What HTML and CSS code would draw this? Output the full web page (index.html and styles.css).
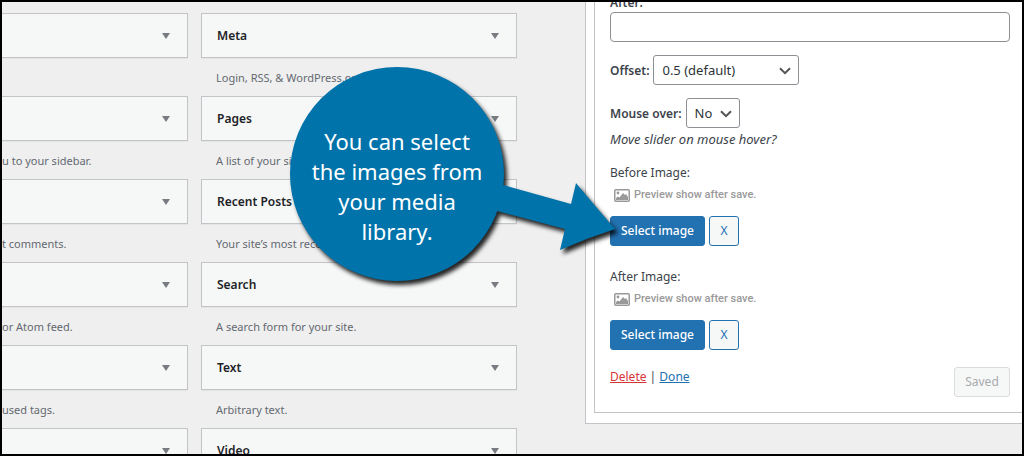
FILE: index.html
```
<!DOCTYPE html>
<html lang="en">
<head>
<meta charset="utf-8">
<title>Widgets</title>
<link rel="stylesheet" href="styles.css">
</head>
<body>
<main class="screen">
  <section class="column column-left">
    <article class="widget"><button class="widget-bar" aria-label="Expand"><span class="arrow"></span></button><p class="widget-desc"></p></article>
    <article class="widget"><button class="widget-bar" aria-label="Expand"><span class="arrow"></span></button><p class="widget-desc">u to your sidebar.</p></article>
    <article class="widget"><button class="widget-bar" aria-label="Expand"><span class="arrow"></span></button><p class="widget-desc">t comments.</p></article>
    <article class="widget"><button class="widget-bar" aria-label="Expand"><span class="arrow"></span></button><p class="widget-desc">or Atom feed.</p></article>
    <article class="widget"><button class="widget-bar" aria-label="Expand"><span class="arrow"></span></button><p class="widget-desc">used tags.</p></article>
    <article class="widget"><button class="widget-bar" aria-label="Expand"><span class="arrow"></span></button></article>
  </section>

  <section class="column">
    <article class="widget"><button class="widget-bar">Meta<span class="arrow"></span></button><p class="widget-desc">Login, RSS, &amp; WordPress.org links.</p></article>
    <article class="widget"><button class="widget-bar">Pages<span class="arrow"></span></button><p class="widget-desc">A list of your site</p></article>
    <article class="widget"><button class="widget-bar">Recent Posts<span class="arrow"></span></button><p class="widget-desc">Your site’s most recent Posts.</p></article>
    <article class="widget"><button class="widget-bar">Search<span class="arrow"></span></button><p class="widget-desc">A search form for your site.</p></article>
    <article class="widget"><button class="widget-bar">Text<span class="arrow"></span></button><p class="widget-desc">Arbitrary text.</p></article>
    <article class="widget"><button class="widget-bar">Video<span class="arrow"></span></button></article>
  </section>

  <section class="sidebar">
    <form class="settings">
      <div class="field-block">
        <label class="strong" for="after">After:</label>
        <input class="text-input" id="after" type="text">
      </div>
      <div class="field-row">
        <label class="strong" for="offset">Offset:</label>
        <span class="select-wrap select-wide">
          <select id="offset"><option>0.5 (default)</option></select>
          <svg class="chevron" viewBox="0 0 12 8" aria-hidden="true"><path d="M1 1.200l5 5 5-5"/></svg>
        </span>
      </div>
      <div class="field-row">
        <label class="strong" for="hover">Mouse over:</label>
        <span class="select-wrap select-small">
          <select id="hover"><option>No</option></select>
          <svg class="chevron" viewBox="0 0 12 8" aria-hidden="true"><path d="M1 1.200l5 5 5-5"/></svg>
        </span>
      </div>
      <p class="hint">Move slider on mouse hover?</p>

      <div class="image-field">
        <p class="image-label">Before Image:</p>
        <p class="preview">
          <svg class="picture" viewBox="0 0 16 13" aria-hidden="true"><rect x=".75" y=".75" width="14.500" height="11.500" rx="1"/><circle cx="4" cy="4" r="1.400"/><path d="M2 11V9l2-1.500 1.500 1L9 4l2 2 1-1 2 3v3z"/></svg>
          Preview show after save.
        </p>
        <div class="buttons">
          <button class="btn btn-primary" type="button">Select image</button>
          <button class="btn btn-clear" type="button">X</button>
        </div>
      </div>
      <div class="image-field">
        <p class="image-label">After Image:</p>
        <p class="preview">
          <svg class="picture" viewBox="0 0 16 13" aria-hidden="true"><rect x=".75" y=".75" width="14.500" height="11.500" rx="1"/><circle cx="4" cy="4" r="1.400"/><path d="M2 11V9l2-1.500 1.500 1L9 4l2 2 1-1 2 3v3z"/></svg>
          Preview show after save.
        </p>
        <div class="buttons">
          <button class="btn btn-primary" type="button">Select image</button>
          <button class="btn btn-clear" type="button">X</button>
        </div>
      </div>

      <div class="actions">
        <p class="links"><a class="delete" href="#">Delete</a> | <a href="#">Done</a></p>
        <button class="btn btn-saved" type="button" disabled>Saved</button>
      </div>
    </form>
  </section>

  <aside class="callout">
    <svg class="callout-shape" viewBox="0 0 340 230" aria-hidden="true">
      <path d="M216 121L284 140 289 119Q308 142 328 165Q300 174 273 186L278 165 210 147Z"/>
      <circle cx="110" cy="110" r="107"/>
    </svg>
    <p class="callout-text">You can select<br>the images from<br>your media<br>library.</p>
  </aside>
</main>
</body>
</html>
```
FILE: styles.css
```
* {
  box-sizing: border-box;
}

body {
  margin: 0;
  font: 12px/18px "Noto Sans", "Open Sans", sans-serif;
  color: #3c434a;
}

p {
  margin: 0;
}

button,
input,
select {
  font: inherit;
}

.screen {
  position: relative;
  display: grid;
  grid-template-columns: 186fr 316fr 492fr;
  column-gap: 13px;
  height: 100vh;
  border: 2px solid #000;
  background: #efefef;
  overflow: hidden;
}

.column {
  display: flex;
  flex-direction: column;
  padding-top: 11px;
}

.widget {
  flex: none;
  height: 83px;
}

.widget-bar {
  display: flex;
  align-items: center;
  justify-content: space-between;
  width: 100%;
  height: 45px;
  padding: 1px 17px 0 15px;
  border: 1px solid #c3c4c7;
  background: #f6f7f7;
  box-shadow: 0 1px 1px rgba(0, 0, 0, 0.04);
  color: #1d2327;
  font-weight: 600;
}

.column-left .widget-bar {
  justify-content: flex-end;
  border-left: 0;
}

.arrow {
  border: 4px solid transparent;
  border-top: 6px solid #787c82;
  border-bottom: 0;
}

.widget-desc {
  padding: 11px 15px 0;
  color: #646970;
  font-size: 11px;
  white-space: nowrap;
}

.column-left .widget-desc {
  padding-left: 0;
}

.sidebar {
  align-self: start;
  margin-left: 55px;
  padding: 0 0 10px 8px;
  border: 1px solid #c3c4c7;
  border-width: 0 0 1px 1px;
  background: #fff;
}

.settings {
  padding: 0 12px 15px 15px;
  border: 1px solid #c3c4c7;
  border-width: 0 0 1px 1px;
}

.strong {
  font-weight: 600;
}

.field-block {
  display: flex;
  flex-direction: column;
  margin-top: -8px;
}

.text-input {
  width: 100%;
  height: 30px;
  border: 1px solid #8c8f94;
  border-radius: 4px;
  background: #fff;
}

.field-row {
  display: flex;
  align-items: center;
  gap: 4px;
  margin-top: 13px;
}

.field-row .strong {
  padding-top: 2px;
}

.select-wrap {
  position: relative;
}

.select-wide {
  width: 146px;
}

.select-small {
  width: 54px;
}

.select-wrap select {
  display: block;
  appearance: none;
  width: 100%;
  height: 30px;
  padding: 0 8px;
  border: 1px solid #8c8f94;
  border-radius: 3px;
  background: #fff;
  color: #2c3338;
  font-size: 13px;
}

.chevron {
  position: absolute;
  top: 12px;
  right: 8px;
  width: 12px;
  height: 8px;
  fill: none;
  stroke: #555;
  stroke-width: 2;
  pointer-events: none;
}

.hint {
  font-size: 13px;
  font-style: italic;
  margin-top: 2px;
}

.image-field {
  margin-top: 16px;
}

.image-field + .image-field {
  margin-top: 22px;
}

.preview {
  display: flex;
  align-items: center;
  gap: 4px;
  margin-top: 3px;
  padding-left: 4px;
  color: #999;
  font: 500 11px/20px Roboto, sans-serif;
}

.picture {
  width: 16px;
  height: 13px;
  fill: #999;
}

.picture rect {
  fill: none;
  stroke: #999;
  stroke-width: 1.5;
}

.buttons {
  display: flex;
  gap: 4px;
  margin-top: 11px;
}

.btn {
  height: 30px;
  padding: 0 10px;
  border: 1px solid #2271b1;
  border-radius: 3px;
  background: #f6f7f7;
  color: #2271b1;
}

.btn-primary {
  width: 95px;
  padding: 0;
  background: #2271b1;
  color: #fff;
  font-weight: 500;
}

.btn-clear {
  width: 30px;
}

.btn-saved {
  width: 56px;
  border-color: #dcdcde;
  color: #a7aaad;
}

.actions {
  display: flex;
  justify-content: space-between;
  margin-top: 17px;
}

.links {
  padding-top: 1px;
}

a {
  color: #2271b1;
}

.delete {
  color: #d63638;
}

.callout {
  position: absolute;
  top: 62px;
  left: 285px;
  width: 340px;
  height: 230px;
}

.callout-shape {
  display: block;
  width: 340px;
  height: 230px;
  fill: #0073aa;
  filter: drop-shadow(3px 4px 2px rgba(0, 0, 0, 0.85));
}

.callout-text {
  position: absolute;
  top: 62px;
  left: 0;
  width: 220px;
  color: #fff;
  font-size: 22px;
  line-height: 30px;
  text-align: center;
}
```
